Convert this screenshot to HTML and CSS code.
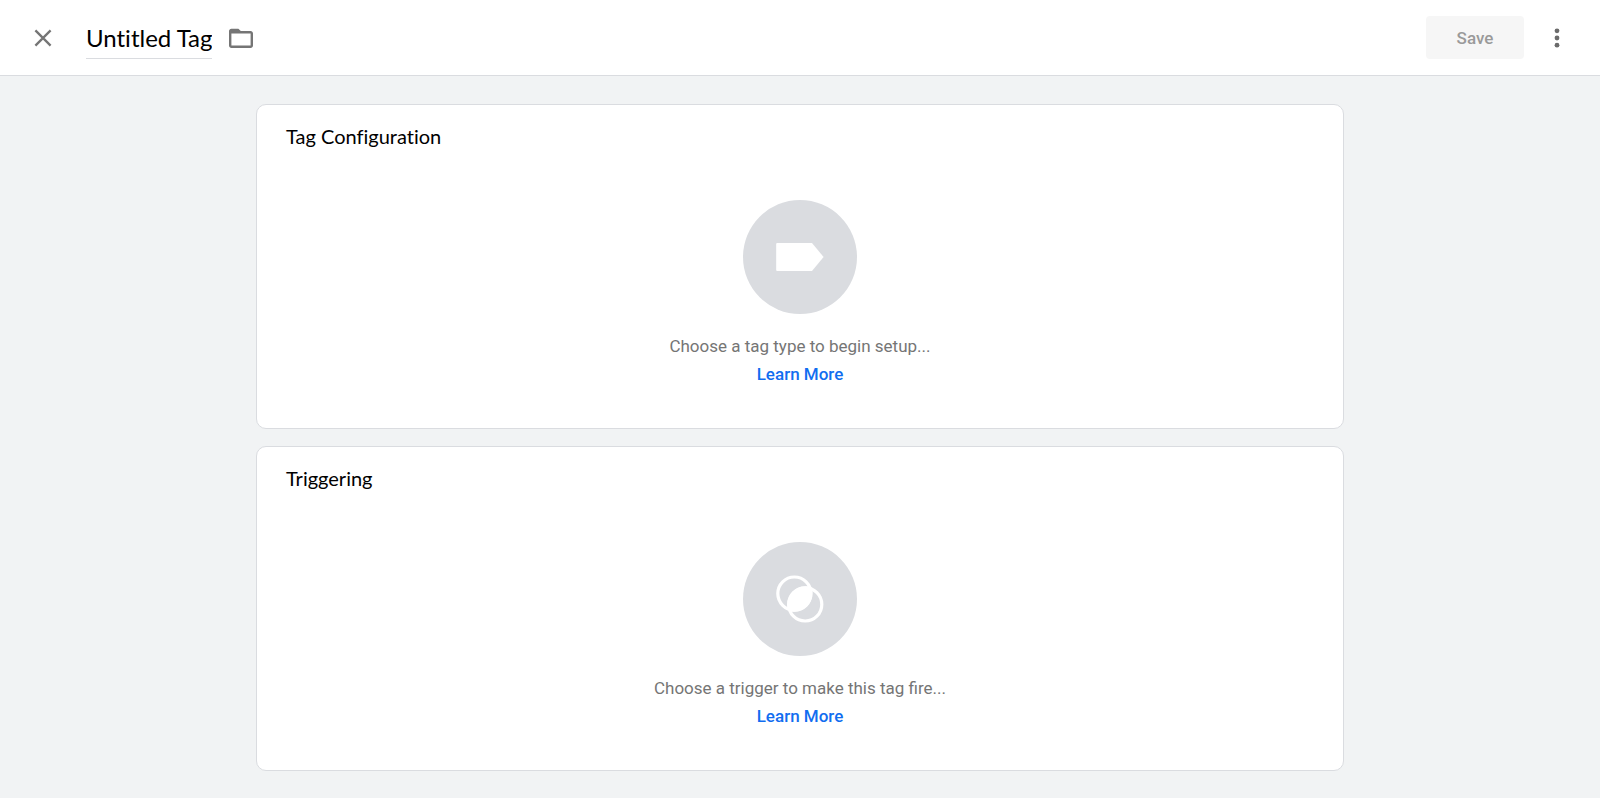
FILE: index.html
```html
<!DOCTYPE html>
<html lang="en">
<head>
  <meta charset="UTF-8">
  <title>Untitled Tag</title>
  <meta name="viewport" content="width=device-width, initial-scale=1.0">
  <link rel="stylesheet" href="styles.css">
</head>
<body>

  <header class="header">
    <button class="icon-btn" type="button" aria-label="Close">
      <svg width="18" height="18" viewBox="0 0 18 18">
        <path d="M1.4 1.4L16.6 16.6M16.6 1.4L1.4 16.6" stroke="#757575" stroke-width="2.3" fill="none"/>
      </svg>
    </button>
    <input class="tag-name" type="text" value="Untitled Tag" aria-label="Tag name">
    <button class="icon-btn folder-btn" type="button" aria-label="Move to folder">
      <svg width="24" height="20" viewBox="0 0 24 20">
        <path d="M2.4 .7H9.4L11.8 3.1H21.6C22.9 3.1 24 4.2 24 5.5V17.6C24 18.9 22.9 20 21.6 20H2.4C1.1 20 0 18.9 0 17.6V3.1C0 1.8 1.1 .7 2.4 .7ZM2.4 5.5V17.6H21.6V5.5Z" fill="#757575" fill-rule="evenodd"/>
      </svg>
    </button>
    <button class="save-btn" type="button" disabled>Save</button>
    <button class="icon-btn" type="button" aria-label="More actions">
      <svg width="6" height="20" viewBox="0 0 6 20">
        <g fill="#6b6b6b">
          <circle cx="3" cy="2.8" r="2.4"/>
          <circle cx="3" cy="10" r="2.4"/>
          <circle cx="3" cy="17.2" r="2.4"/>
        </g>
      </svg>
    </button>
  </header>

  <main class="content">
    <section class="card">
      <h2>Tag Configuration</h2>
      <div class="placeholder">
        <div class="circle">
          <svg width="48" height="48" viewBox="0 0 48 48">
            <path d="M1.2 10H36L47.6 24L36 38H1.2Q.2 38 .2 37V11Q.2 10 1.2 10Z" fill="#fff"/>
          </svg>
        </div>
        <p>Choose a tag type to begin setup...</p>
        <a href="#">Learn More</a>
      </div>
    </section>

    <section class="card">
      <h2>Triggering</h2>
      <div class="placeholder">
        <div class="circle">
          <svg width="48" height="48" viewBox="0 0 48 48">
            <g fill="none" stroke="#fff" stroke-width="3.2">
              <circle cx="18.4" cy="18.6" r="16.6"/>
              <circle cx="29.2" cy="29.4" r="16.6"/>
            </g>
            <path d="M35.3 12.1A18.2 18.2 0 0 1 12.5 35.7A18.2 18.2 0 0 1 35.3 12.1Z" fill="#fff"/>
          </svg>
        </div>
        <p>Choose a trigger to make this tag fire...</p>
        <a href="#">Learn More</a>
      </div>
    </section>
  </main>

</body>
</html>
```

FILE: styles.css
```css
* {
  box-sizing: border-box;
}

body {
  font-family: Roboto, Arial, sans-serif;
  background: #f1f3f4;
  margin: 0;
}

.header {
  display: flex;
  align-items: center;
  background: white;
  height: 76px;
  padding: 0 23px;
  border-bottom: 1px solid #dadce0;
}

.icon-btn {
  display: flex;
  align-items: center;
  justify-content: center;
  width: 40px;
  height: 40px;
  padding: 0;
  border: none;
  background: none;
  cursor: pointer;
}

.tag-name {
  width: 126px;
  height: 43px;
  margin-left: 23px;
  padding: 0;
  border: none;
  border-bottom: 1px solid #dadce0;
  background: none;
  font-family: Lato, Roboto, sans-serif;
  font-size: 24px;
  font-variant-ligatures: none;
  color: #000;
  outline: none;
}

.folder-btn {
  margin-left: 9px;
}

.save-btn {
  width: 98px;
  height: 43px;
  margin-left: auto;
  margin-right: 13px;
  border: none;
  border-radius: 4px;
  background: #f6f6f6;
  color: #9a9a9a;
  font-family: Roboto, sans-serif;
  font-size: 17px;
  font-weight: 500;
}

.content {
  display: flex;
  flex-direction: column;
  gap: 17px;
  width: 68%;
  margin: 0 auto;
  padding: 28px 0 26px;
}

.card {
  background: white;
  border: 1px solid #dadce0;
  border-radius: 10px;
  padding: 16px 29px 40px;
}

.card h2 {
  margin: 0;
  font-family: Lato, Roboto, sans-serif;
  font-size: 20px;
  font-weight: 400;
  font-variant-ligatures: none;
  line-height: 30px;
  color: #000;
}

.placeholder {
  display: flex;
  flex-direction: column;
  align-items: center;
  padding-top: 49px;
  font-size: 17px;
  line-height: 28px;
  color: #757575;
}

.circle {
  display: flex;
  align-items: center;
  justify-content: center;
  width: 114px;
  height: 114px;
  margin-bottom: 18px;
  border-radius: 50%;
  background: #dadce0;
}

.placeholder p {
  margin: 0;
}

.placeholder a {
  color: #116df0;
  font-weight: 500;
  text-decoration: none;
}
```
